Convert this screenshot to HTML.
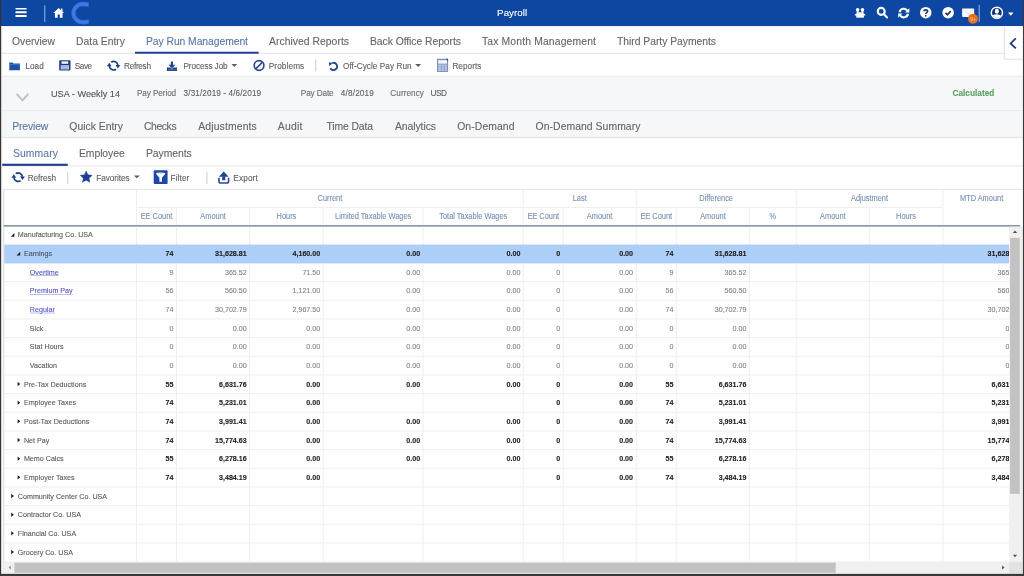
<!DOCTYPE html>
<html><head><meta charset="utf-8"><style>
html,body{margin:0;padding:0;width:1024px;height:576px;overflow:hidden;background:#fff}
#root{position:absolute;left:0;top:0;width:1920px;height:1080px;transform:scale(0.5333333);transform-origin:0 0;filter:blur(0.35px);font-family:"Liberation Sans",sans-serif;color:#555;-webkit-text-stroke:0.2px currentColor;overflow:hidden;background:#fff}
.a{position:absolute;white-space:nowrap}
svg{position:absolute;overflow:visible}
</style></head><body><div id="root">
<div class="a" style="left:0px;top:0px;width:1920px;height:49.5px;background:#0d47a1"></div>
<div class="a" style="left:29.25px;top:14.879999999999999px;width:20.25px;height:3.6px;background:#fff;border-radius:1px"></div>
<div class="a" style="left:29.25px;top:21.44px;width:20.25px;height:3.6px;background:#fff;border-radius:1px"></div>
<div class="a" style="left:29.25px;top:28.19px;width:20.25px;height:3.6px;background:#fff;border-radius:1px"></div>
<div class="a" style="left:82.88px;top:10.12px;width:2px;height:31.13px;background:#8fb0e8"></div>
<svg style="left:99.75px;top:14.62px" width="20.25" height="18.38" viewBox="0 0 20 18"><path d="M10 0 L20 9 L17 9 L17 18 L12 18 L12 12 L8 12 L8 18 L3 18 L3 9 L0 9 Z" fill="#fff"/><rect x="14" y="1" width="3" height="5" fill="#fff"/></svg>
<svg style="left:127.5px;top:0.0px" width="45.0" height="50.62" viewBox="68 0 24 27"><path d="M88.5 2.8 Q86 2.1 82.5 2.1 A11.2 11.05 0 0 0 82.5 24.2 Q86 24.2 88.5 23.5 L88.3 19.6 Q86 20.2 82.5 20.2 A7.4 7.05 0 0 1 82.5 6.1 Q86 6.1 88.3 6.7 Z" fill="#3a79e6" stroke="#2f66d0" stroke-width="0.5"/></svg>
<div class="a" style="left:932.06px;top:12.19px;font-size:18.4px;line-height:24px;color:#fff;font-weight:normal;">Payroll</div>
<svg style="left:1597.5px;top:7.5px" width="30.0" height="30.0" viewBox="852 4 16 16"><circle cx="857.4" cy="9.5" r="1.8" fill="#fff"/><circle cx="862.2" cy="9.5" r="1.8" fill="#fff"/><rect x="856.4" y="10" width="2" height="4" fill="#fff"/><rect x="861.2" y="10" width="2" height="4" fill="#fff"/><path d="M854.2 15.2 Q854.8 13.2 857.2 12.9 L862.4 12.9 Q864.8 13.2 865.4 15.2 Z" fill="#fff"/><rect x="856" y="14.8" width="7.6" height="2.6" fill="#fff"/><rect x="858.5" y="12" width="2.6" height="3" fill="#fff"/></svg>
<svg style="left:1638.75px;top:9.38px" width="30.0" height="30.0" viewBox="874 5 16 16"><circle cx="881.1" cy="11.6" r="3.5" fill="none" stroke="#fff" stroke-width="2.1"/><path d="M883.6 14.2 L886.9 17.6" stroke="#fff" stroke-width="2.1" stroke-linecap="round"/></svg>
<svg style="left:1725.0px;top:13.12px" width="21.56" height="21.56" viewBox="0 0 24 24"><circle cx="12" cy="12" r="12" fill="#fff"/><path d="M8 9 C8 5.5 16 5 16 9 C16 12 12 12 12 14.5" fill="none" stroke="#22306e" stroke-width="3.4"/><circle cx="12" cy="18.5" r="1.8" fill="#22306e"/></svg>
<svg style="left:1767.0px;top:13.12px" width="21.56" height="21.56" viewBox="0 0 24 24"><circle cx="12" cy="12" r="12" fill="#fff"/><path d="M6.5 12.5 L10.5 16.5 L17.5 8.5" fill="none" stroke="#242d6e" stroke-width="3.4"/></svg>
<svg style="left:1803.75px;top:15.94px" width="22.5" height="15.94" viewBox="0 0 24 17"><rect x="0" y="0" width="24" height="17" rx="1.5" fill="#fff"/><path d="M1 1.5 L12 10 L23 1.5" fill="none" stroke="#c9d6ec" stroke-width="1.6"/></svg>
<svg style="left:1815.0px;top:25.88px" width="18.75" height="18.75" viewBox="0 0 20 20"><circle cx="10" cy="10" r="10" fill="#e86f1f"/><text x="10" y="13.5" font-size="10" font-family="Liberation Sans" font-weight="bold" fill="#f6b27a" text-anchor="middle">9+</text></svg>
<div class="a" style="left:1835.44px;top:9.38px;width:2px;height:31.88px;background:#8fb0e8"></div>
<svg style="left:1856.25px;top:11.25px" width="26.25" height="26.25" viewBox="990 6 14 14"><defs><clipPath id="uc"><circle cx="997" cy="12.9" r="4.9"/></clipPath></defs><circle cx="997" cy="12.9" r="5.6" fill="#0b2f78" stroke="#fff" stroke-width="1.5"/><g clip-path="url(#uc)"><ellipse cx="997" cy="11.3" rx="2" ry="2.6" fill="#fff"/><path d="M991 19 Q991.5 14.6 997 14.3 Q1002.5 14.6 1003 19 Z" fill="#fff"/></g></svg>
<svg style="left:1890.0px;top:22.5px" width="10.31" height="6.75" viewBox="0 0 10 6"><path d="M0 0 L10 0 L5 6Z" fill="#fff"/></svg>
<div class="a" style="left:0px;top:49px;width:1920px;height:52px;background:#fff"></div>
<div class="a" style="left:0px;top:99px;width:1920px;height:2px;background:#e2e2e2"></div>
<div class="a" style="left:22.5px;top:65.69px;font-size:19.4px;line-height:25px;color:#656565;font-weight:normal;letter-spacing:-0.032px;">Overview</div>
<div class="a" style="left:142.5px;top:65.69px;font-size:19.4px;line-height:25px;color:#656565;font-weight:normal;letter-spacing:0.026px;">Data Entry</div>
<div class="a" style="left:273.75px;top:65.69px;font-size:19.4px;line-height:25px;color:#5677a8;font-weight:normal;letter-spacing:-0.104px;">Pay Run Management</div>
<div class="a" style="left:504.38px;top:65.69px;font-size:19.4px;line-height:25px;color:#656565;font-weight:normal;letter-spacing:0.081px;">Archived Reports</div>
<div class="a" style="left:693.75px;top:65.69px;font-size:19.4px;line-height:25px;color:#656565;font-weight:normal;letter-spacing:-0.085px;">Back Office Reports</div>
<div class="a" style="left:903.75px;top:65.69px;font-size:19.4px;line-height:25px;color:#656565;font-weight:normal;letter-spacing:0.297px;">Tax Month Management</div>
<div class="a" style="left:1156.88px;top:65.69px;font-size:19.4px;line-height:25px;color:#656565;font-weight:normal;letter-spacing:-0.046px;">Third Party Payments</div>
<div class="a" style="left:253.12px;top:97.31px;width:231.56px;height:4px;background:#23419a"></div>
<div class="a" style="left:0px;top:101px;width:1920px;height:44px;background:#fff"></div>
<div class="a" style="left:0px;top:141.56px;width:1920px;height:2px;background:#e6e6e6"></div>
<svg style="left:15.0px;top:112.5px" width="26.25" height="22.5" viewBox="8 60 14 12"><path d="M9.3 62.6 Q9.3 62.2 9.7 62.2 L12.6 62.2 L13.4 63.2 L19.9 63.2 L19.9 70.1 L9.3 70.1Z" fill="#1f50a8"/><rect x="9.3" y="64.3" width="10.6" height="0.5" fill="#6b93d6"/></svg>
<div class="a" style="left:47.81px;top:114.12px;font-size:15.4px;line-height:20px;color:#606060;font-weight:normal;letter-spacing:-0.012px;transform:scaleY(1.09);">Load</div>
<svg style="left:110.62px;top:113.44px" width="21.19" height="19.31" viewBox="0 0 22 20"><rect x="0" y="0" width="22" height="20" rx="2" fill="#243a80"/><rect x="4.5" y="2" width="13" height="5" fill="#e8eef8"/><rect x="3" y="9.5" width="16" height="8.5" fill="#b9c9e6"/><rect x="5" y="12" width="12" height="1.4" fill="#8ea6d2"/><rect x="5" y="15" width="12" height="1.4" fill="#8ea6d2"/></svg>
<div class="a" style="left:140.06px;top:114.12px;font-size:15.4px;line-height:20px;color:#606060;font-weight:normal;letter-spacing:-0.762px;transform:scaleY(1.09);">Save</div>
<svg style="left:197.81px;top:109.87px" width="30.0" height="26.25" viewBox="105.5 58.599999999999994 16.0 14.0"><path d="M111.03 62.08 A4.3 4.3 0 0 1 117.78 65.23" fill="none" stroke="#1d3a85" stroke-width="1.7"/><path d="M115.97 69.12 A4.3 4.3 0 0 1 109.22 65.97" fill="none" stroke="#1d3a85" stroke-width="1.7"/><path d="M115.39999999999999 65.0 L120.2 65.0 L117.8 68.5Z" fill="#1d3a85"/><path d="M106.8 66.19999999999999 L111.60000000000001 66.19999999999999 L109.2 62.699999999999996Z" fill="#1d3a85"/></svg>
<div class="a" style="left:232.5px;top:114.12px;font-size:15.4px;line-height:20px;color:#606060;font-weight:normal;letter-spacing:-0.549px;transform:scaleY(1.09);">Refresh</div>
<svg style="left:309.38px;top:110.62px" width="26.25" height="26.25" viewBox="165 59 14 14"><rect x="171" y="61.4" width="2.2" height="3.6" fill="#22448f"/><path d="M168.6 64.6 L175.6 64.6 L172.1 68.3Z" fill="#22448f"/><path d="M167.1 67.2 L170.6 67.2 L172.1 68.9 L173.6 67.2 L177.1 67.2 L177.1 70.9 L167.1 70.9Z" fill="#22448f"/><rect x="168.2" y="69.2" width="7.8" height="0.8" fill="#4f77c0"/></svg>
<div class="a" style="left:343.88px;top:114.12px;font-size:15.4px;line-height:20px;color:#606060;font-weight:normal;letter-spacing:-0.167px;transform:scaleY(1.09);">Process Job</div>
<svg style="left:431.25px;top:116.25px" width="18.75" height="11.25" viewBox="230 62 10 6"><path d="M231.6 64.2 L237.3 64.2 L234.45 67.1Z" fill="#5a5a5a"/></svg>
<svg style="left:468.75px;top:108.75px" width="31.88" height="28.12" viewBox="250 58 17 15"><circle cx="258.9" cy="65.4" r="4.85" fill="none" stroke="#2a4796" stroke-width="1.7"/><path d="M255.6 68.7 L262.2 62.1" stroke="#2a4796" stroke-width="1.7"/></svg>
<div class="a" style="left:503.91px;top:114.12px;font-size:15.4px;line-height:20px;color:#606060;font-weight:normal;letter-spacing:0.204px;transform:scaleY(1.09);">Problems</div>
<div class="a" style="left:590.62px;top:111.38px;width:2px;height:23.06px;background:#cfcfcf"></div>
<svg style="left:611.25px;top:110.62px" width="26.25" height="26.25" viewBox="326 59 14 14"><path d="M332.37 62.82 A3.6 3.6 0 1 1 330.48 68.00" fill="none" stroke="#24428f" stroke-width="1.8"/><path d="M329 62.3 L333 62.6 L329.4 66Z" fill="#24428f"/></svg>
<div class="a" style="left:643.12px;top:114.12px;font-size:15.4px;line-height:20px;color:#606060;font-weight:normal;letter-spacing:0.087px;transform:scaleY(1.09);">Off-Cycle Pay Run</div>
<svg style="left:774.38px;top:116.25px" width="18.75" height="11.25" viewBox="413 62 10 6"><path d="M415.4 64.2 L421.3 64.2 L418.35 67.1Z" fill="#5a5a5a"/></svg>
<svg style="left:815.62px;top:106.88px" width="28.12" height="31.88" viewBox="435 57 15 17"><rect x="436.8" y="58.7" width="11.1" height="13.2" fill="#7d8fb9"/><path d="M445.5 58.7 L447.9 58.7 L447.9 61.2Z" fill="#3d4f7e"/><rect x="437.9" y="60.1" width="8.9" height="3.5" fill="#f3f6fc"/><rect x="437.9" y="64.4" width="8.9" height="6.6" fill="#b9c8e8"/><rect x="440.8" y="64.4" width="0.7" height="6.6" fill="#7d8fb9"/><rect x="443.7" y="64.4" width="0.7" height="6.6" fill="#7d8fb9"/><rect x="437.9" y="66.5" width="8.9" height="0.5" fill="#98a9d0"/><rect x="437.9" y="68.6" width="8.9" height="0.5" fill="#98a9d0"/></svg>
<div class="a" style="left:848.25px;top:114.12px;font-size:15.4px;line-height:20px;color:#606060;font-weight:normal;letter-spacing:0.076px;transform:scaleY(1.09);">Reports</div>
<div class="a" style="left:1882.31px;top:49.5px;width:35.809999999999945px;height:62.25px;background:#fff;border-left:2px solid #e2e2e2;border-bottom:2px solid #e2e2e2;box-sizing:border-box"></div>
<svg style="left:1890.0px;top:65.62px" width="18.75" height="30.0" viewBox="1008 35 10 16"><path d="M1015.8 38.2 L1010.6 43.2 L1015.8 48.2" fill="none" stroke="#22397a" stroke-width="1.8"/></svg>
<div class="a" style="left:0px;top:144.38px;width:1920px;height:63.18000000000001px;background:#f6f7f9"></div>
<div class="a" style="left:0px;top:206.62px;width:1920px;height:2px;background:#e3e3e3"></div>
<svg style="left:26.25px;top:168.75px" width="33.75" height="26.25" viewBox="14 90 18 14"><path d="M16.9 93.9 L22.6 100.2 L28.3 93.9" fill="none" stroke="#c2c2c2" stroke-width="2"/></svg>
<div class="a" style="left:95.62px;top:164.50px;font-size:17.16px;line-height:22px;color:#555;font-weight:normal;letter-spacing:0px;">USA - Weekly 14</div>
<div class="a" style="left:256.88px;top:163.62px;font-size:15.4px;line-height:20px;color:#6e6e6e;font-weight:normal;letter-spacing:-0.203px;transform:scaleY(1.09);">Pay Period</div>
<div class="a" style="left:344.25px;top:163.62px;font-size:15.4px;line-height:20px;color:#5e5e5e;font-weight:normal;letter-spacing:0.177px;transform:scaleY(1.09);">3/31/2019 - 4/6/2019</div>
<div class="a" style="left:564.0px;top:163.62px;font-size:15.4px;line-height:20px;color:#6e6e6e;font-weight:normal;letter-spacing:-0.236px;transform:scaleY(1.09);">Pay Date</div>
<div class="a" style="left:639.0px;top:163.62px;font-size:15.4px;line-height:20px;color:#5e5e5e;font-weight:normal;letter-spacing:0.303px;transform:scaleY(1.09);">4/8/2019</div>
<div class="a" style="left:731.81px;top:163.62px;font-size:15.4px;line-height:20px;color:#6e6e6e;font-weight:normal;letter-spacing:0.103px;transform:scaleY(1.09);">Currency</div>
<div class="a" style="left:807.19px;top:163.62px;font-size:15.4px;line-height:20px;color:#5e5e5e;font-weight:normal;letter-spacing:-0.789px;transform:scaleY(1.09);">USD</div>
<div class="a" style="left:1785.94px;top:164.19px;font-size:15.5px;line-height:20px;color:#5a9f5e;font-weight:bold;letter-spacing:0px;transform:scaleY(1.09);">Calculated</div>
<div class="a" style="left:0px;top:208.5px;width:1920px;height:49.120000000000005px;background:#f6f7f9"></div>
<div class="a" style="left:0px;top:257.25px;width:1920px;height:2px;background:#e3e3e3"></div>
<div class="a" style="left:22.88px;top:224.31px;font-size:19.5px;line-height:25px;color:#5d7aa6;font-weight:normal;letter-spacing:-0.278px;">Preview</div>
<div class="a" style="left:129.94px;top:224.31px;font-size:19.5px;line-height:25px;color:#656565;font-weight:normal;letter-spacing:-0.008px;">Quick Entry</div>
<div class="a" style="left:270.0px;top:224.31px;font-size:19.5px;line-height:25px;color:#656565;font-weight:normal;letter-spacing:-0.779px;">Checks</div>
<div class="a" style="left:371.62px;top:224.31px;font-size:19.5px;line-height:25px;color:#656565;font-weight:normal;letter-spacing:0.258px;">Adjustments</div>
<div class="a" style="left:520.88px;top:224.31px;font-size:19.5px;line-height:25px;color:#656565;font-weight:normal;letter-spacing:0.373px;">Audit</div>
<div class="a" style="left:612.0px;top:224.31px;font-size:19.5px;line-height:25px;color:#656565;font-weight:normal;letter-spacing:-0.206px;">Time Data</div>
<div class="a" style="left:740.62px;top:224.31px;font-size:19.5px;line-height:25px;color:#656565;font-weight:normal;letter-spacing:-0.144px;">Analytics</div>
<div class="a" style="left:857.25px;top:224.31px;font-size:19.5px;line-height:25px;color:#656565;font-weight:normal;letter-spacing:0.154px;">On-Demand</div>
<div class="a" style="left:1004.25px;top:224.31px;font-size:19.5px;line-height:25px;color:#656565;font-weight:normal;letter-spacing:0.091px;">On-Demand Summary</div>
<div class="a" style="left:24.19px;top:274.56px;font-size:19.5px;line-height:25px;color:#5d7aa6;font-weight:normal;letter-spacing:0.19px;">Summary</div>
<div class="a" style="left:148.12px;top:274.56px;font-size:19.5px;line-height:25px;color:#656565;font-weight:normal;letter-spacing:-0.146px;">Employee</div>
<div class="a" style="left:273.75px;top:274.56px;font-size:19.5px;line-height:25px;color:#656565;font-weight:normal;letter-spacing:-0.144px;">Payments</div>
<div class="a" style="left:0px;top:309.94px;width:1920px;height:2px;background:#e6e6e6"></div>
<div class="a" style="left:4.31px;top:306.56px;width:122.63px;height:4px;background:#1f3d8e"></div>
<svg style="left:19.12px;top:318.56px" width="30.0" height="26.25" viewBox="10.2 169.9 16.0 14.0"><path d="M15.73 173.38 A4.3 4.3 0 0 1 22.48 176.53" fill="none" stroke="#1d3a85" stroke-width="1.7"/><path d="M20.67 180.42 A4.3 4.3 0 0 1 13.92 177.27" fill="none" stroke="#1d3a85" stroke-width="1.7"/><path d="M20.1 176.3 L24.9 176.3 L22.5 179.8Z" fill="#1d3a85"/><path d="M11.499999999999998 177.5 L16.299999999999997 177.5 L13.899999999999999 174.0Z" fill="#1d3a85"/></svg>
<div class="a" style="left:51.94px;top:323.00px;font-size:15.4px;line-height:20px;color:#606060;font-weight:normal;letter-spacing:-0.08px;transform:scaleY(1.09);">Refresh</div>
<div class="a" style="left:126.0px;top:322.5px;width:2px;height:22.5px;background:#cfcfcf"></div>
<svg style="left:146.25px;top:316.88px" width="30.0" height="30.0" viewBox="78 169 16 16"><path d="M86.30 170.90 L88.09 174.73 L92.29 175.25 L89.20 178.14 L90.00 182.30 L86.30 180.25 L82.60 182.30 L83.40 178.14 L80.31 175.25 L84.51 174.73Z" fill="#1f3f94" stroke="#1f3f94" stroke-width="0.4" stroke-linejoin="round"/></svg>
<div class="a" style="left:180.38px;top:323.00px;font-size:15.4px;line-height:20px;color:#606060;font-weight:normal;letter-spacing:-0.064px;transform:scaleY(1.09);">Favorites</div>
<svg style="left:247.5px;top:326.25px" width="18.75" height="11.25" viewBox="132 174 10 6"><path d="M133.7 175.6 L139.4 175.6 L136.55 178.5Z" fill="#5a5a5a"/></svg>
<svg style="left:285.0px;top:316.88px" width="31.88" height="31.88" viewBox="152 169 17 17"><rect x="153.7" y="170.1" width="13.9" height="13.9" rx="1" fill="#1f47a6"/><path d="M156.2 173.2 Q156.2 172.4 160.65 172.4 Q165.1 172.4 165.1 173.2 L165.1 174 L161.9 177.6 L161.9 181.6 L159.4 181.6 L159.4 177.6 L156.2 174Z" fill="#fff"/><ellipse cx="160.65" cy="173.5" rx="3.2" ry="0.5" fill="#c9d6f0"/></svg>
<div class="a" style="left:319.88px;top:323.00px;font-size:15.4px;line-height:20px;color:#606060;font-weight:normal;letter-spacing:0.169px;transform:scaleY(1.09);">Filter</div>
<div class="a" style="left:387.0px;top:322.5px;width:2px;height:22.5px;background:#cfcfcf"></div>
<svg style="left:405.0px;top:316.88px" width="28.12" height="31.88" viewBox="216 169 15 17"><path d="M218.9 176.8 L223.75 171.4 L228.6 176.8Z" fill="#21449a"/><rect x="222.2" y="176.3" width="3.1" height="3.9" fill="#21449a"/><path d="M219 177.6 L219 181.2 Q219 183 220.8 183 L226.8 183 Q228.6 183 228.6 181.2 L228.6 177.6" fill="none" stroke="#2b4a94" stroke-width="1.6"/></svg>
<div class="a" style="left:437.44px;top:323.00px;font-size:15.4px;line-height:20px;color:#606060;font-weight:normal;letter-spacing:0.286px;transform:scaleY(1.09);">Export</div>
<svg style="left:1680.0px;top:7.5px" width="30.0" height="33.75" viewBox="896 4 16 18"><path d="M899.57 12.00 A4.3 4.3 0 0 1 907.52 10.60" fill="none" stroke="#fff" stroke-width="2.1"/><path d="M908.03 13.50 A4.3 4.3 0 0 1 900.08 14.90" fill="none" stroke="#fff" stroke-width="2.1"/><path d="M909.4 7.9 L909.4 12.2 L905.1 12.2Z" fill="#fff"/><path d="M898.2 17.6 L898.2 13.3 L902.5 13.3Z" fill="#fff"/></svg>
<div class="a" style="left:0;top:354.38px;width:1920px;height:725.62px;background:#fff"></div>
<div class="a" style="left:5.56px;top:354.38px;width:2px;height:725.62px;background:#dcdcdc"></div>
<div class="a" style="left:6.56px;top:354.38px;width:1911.0px;height:2px;background:#e6e6e6"></div>
<div class="a" style="left:255.94px;top:388.12px;width:1511.62px;height:2px;background:#efefef"></div>
<div class="a" style="left:254.94px;top:354.38px;width:2px;height:68.62px;background:#efefef"></div>
<div class="a" style="left:329.94px;top:388.12px;width:2px;height:34.879999999999995px;background:#efefef"></div>
<div class="a" style="left:467.19px;top:388.12px;width:2px;height:34.879999999999995px;background:#efefef"></div>
<div class="a" style="left:605.0px;top:388.12px;width:2px;height:34.879999999999995px;background:#efefef"></div>
<div class="a" style="left:792.31px;top:388.12px;width:2px;height:34.879999999999995px;background:#efefef"></div>
<div class="a" style="left:980.38px;top:354.38px;width:2px;height:68.62px;background:#efefef"></div>
<div class="a" style="left:1055.0px;top:388.12px;width:2px;height:34.879999999999995px;background:#efefef"></div>
<div class="a" style="left:1191.5px;top:354.38px;width:2px;height:68.62px;background:#efefef"></div>
<div class="a" style="left:1267.44px;top:388.12px;width:2px;height:34.879999999999995px;background:#efefef"></div>
<div class="a" style="left:1404.12px;top:388.12px;width:2px;height:34.879999999999995px;background:#efefef"></div>
<div class="a" style="left:1492.06px;top:354.38px;width:2px;height:68.62px;background:#efefef"></div>
<div class="a" style="left:1628.94px;top:388.12px;width:2px;height:34.879999999999995px;background:#efefef"></div>
<div class="a" style="left:1766.56px;top:354.38px;width:2px;height:68.62px;background:#efefef"></div>
<div class="a" style="left:255.94px;top:361.25px;width:725.44px;text-align:center;font-size:13.9px;line-height:20px;color:#7891b6;font-weight:normal;transform:scaleY(1.1)">Current</div>
<div class="a" style="left:981.38px;top:361.25px;width:211.12px;text-align:center;font-size:13.9px;line-height:20px;color:#7891b6;font-weight:normal;transform:scaleY(1.1)">Last</div>
<div class="a" style="left:1192.5px;top:361.25px;width:300.55999999999995px;text-align:center;font-size:13.9px;line-height:20px;color:#7891b6;font-weight:normal;transform:scaleY(1.1)">Difference</div>
<div class="a" style="left:1493.06px;top:361.25px;width:274.5px;text-align:center;font-size:13.9px;line-height:20px;color:#7891b6;font-weight:normal;transform:scaleY(1.1)">Adjustment</div>
<div class="a" style="left:1767.56px;top:361.25px;width:145.8800000000001px;text-align:center;font-size:13.9px;line-height:20px;color:#7891b6;font-weight:normal;transform:scaleY(1.1)">MTD Amount</div>
<div class="a" style="left:255.94px;top:395.94px;width:75.0px;text-align:center;font-size:13.9px;line-height:20px;color:#7891b6;font-weight:normal;transform:scaleY(1.1)">EE Count</div>
<div class="a" style="left:330.94px;top:395.94px;width:137.25px;text-align:center;font-size:13.9px;line-height:20px;color:#7891b6;font-weight:normal;transform:scaleY(1.1)">Amount</div>
<div class="a" style="left:468.19px;top:395.94px;width:137.81px;text-align:center;font-size:13.9px;line-height:20px;color:#7891b6;font-weight:normal;transform:scaleY(1.1)">Hours</div>
<div class="a" style="left:606.0px;top:395.94px;width:187.30999999999995px;text-align:center;font-size:13.9px;line-height:20px;color:#7891b6;font-weight:normal;transform:scaleY(1.1)">Limited Taxable Wages</div>
<div class="a" style="left:793.31px;top:395.94px;width:188.07000000000005px;text-align:center;font-size:13.9px;line-height:20px;color:#7891b6;font-weight:normal;transform:scaleY(1.1)">Total Taxable Wages</div>
<div class="a" style="left:981.38px;top:395.94px;width:74.62px;text-align:center;font-size:13.9px;line-height:20px;color:#7891b6;font-weight:normal;transform:scaleY(1.1)">EE Count</div>
<div class="a" style="left:1056.0px;top:395.94px;width:136.5px;text-align:center;font-size:13.9px;line-height:20px;color:#7891b6;font-weight:normal;transform:scaleY(1.1)">Amount</div>
<div class="a" style="left:1192.5px;top:395.94px;width:75.94000000000005px;text-align:center;font-size:13.9px;line-height:20px;color:#7891b6;font-weight:normal;transform:scaleY(1.1)">EE Count</div>
<div class="a" style="left:1268.44px;top:395.94px;width:136.67999999999984px;text-align:center;font-size:13.9px;line-height:20px;color:#7891b6;font-weight:normal;transform:scaleY(1.1)">Amount</div>
<div class="a" style="left:1405.12px;top:395.94px;width:87.94000000000005px;text-align:center;font-size:13.9px;line-height:20px;color:#7891b6;font-weight:normal;transform:scaleY(1.1)">%</div>
<div class="a" style="left:1493.06px;top:395.94px;width:136.8800000000001px;text-align:center;font-size:13.9px;line-height:20px;color:#7891b6;font-weight:normal;transform:scaleY(1.1)">Amount</div>
<div class="a" style="left:1629.94px;top:395.94px;width:137.6199999999999px;text-align:center;font-size:13.9px;line-height:20px;color:#7891b6;font-weight:normal;transform:scaleY(1.1)">Hours</div>
<div class="a" style="left:6.56px;top:421.5px;width:1906.88px;height:3px;background:#8393a6"></div>
<div class="a" style="left:0;top:424.5px;width:1892.25px;height:628.69px;overflow:hidden"><div class="a" style="left:0;top:-424.5px;width:1920px;height:1080px"><div class="a" style="left:7.56px;top:457px;width:1906.88px;height:2px;background:#efefef"></div>
<div class="a" style="left:254.94px;top:423px;width:2px;height:35px;background:#efefef"></div>
<div class="a" style="left:329.94px;top:423px;width:2px;height:35px;background:#efefef"></div>
<div class="a" style="left:467.19px;top:423px;width:2px;height:35px;background:#efefef"></div>
<div class="a" style="left:605.0px;top:423px;width:2px;height:35px;background:#efefef"></div>
<div class="a" style="left:792.31px;top:423px;width:2px;height:35px;background:#efefef"></div>
<div class="a" style="left:980.38px;top:423px;width:2px;height:35px;background:#efefef"></div>
<div class="a" style="left:1055.0px;top:423px;width:2px;height:35px;background:#efefef"></div>
<div class="a" style="left:1191.5px;top:423px;width:2px;height:35px;background:#efefef"></div>
<div class="a" style="left:1267.44px;top:423px;width:2px;height:35px;background:#efefef"></div>
<div class="a" style="left:1404.12px;top:423px;width:2px;height:35px;background:#efefef"></div>
<div class="a" style="left:1492.06px;top:423px;width:2px;height:35px;background:#efefef"></div>
<div class="a" style="left:1628.94px;top:423px;width:2px;height:35px;background:#efefef"></div>
<div class="a" style="left:1766.56px;top:423px;width:2px;height:35px;background:#efefef"></div>
<svg style="left:19.690000000000005px;top:436.5px" width="7" height="7" viewBox="0 0 7 7"><path d="M7 0 L7 7 L0 7Z" fill="#222"/></svg>
<div class="a" style="left:33.38px;top:430.5px;font-size:13.4px;line-height:20px;transform:scaleY(1.07);color:#5a5a5a">Manufacturing Co. USA</div>
<div class="a" style="left:7.56px;top:459px;width:1906.88px;height:34.5px;background:#adcef7"></div>
<div class="a" style="left:254.94px;top:458px;width:2px;height:35px;background:#adcef7"></div>
<div class="a" style="left:329.94px;top:458px;width:2px;height:35px;background:#adcef7"></div>
<div class="a" style="left:467.19px;top:458px;width:2px;height:35px;background:#adcef7"></div>
<div class="a" style="left:605.0px;top:458px;width:2px;height:35px;background:#adcef7"></div>
<div class="a" style="left:792.31px;top:458px;width:2px;height:35px;background:#adcef7"></div>
<div class="a" style="left:980.38px;top:458px;width:2px;height:35px;background:#adcef7"></div>
<div class="a" style="left:1055.0px;top:458px;width:2px;height:35px;background:#adcef7"></div>
<div class="a" style="left:1191.5px;top:458px;width:2px;height:35px;background:#adcef7"></div>
<div class="a" style="left:1267.44px;top:458px;width:2px;height:35px;background:#adcef7"></div>
<div class="a" style="left:1404.12px;top:458px;width:2px;height:35px;background:#adcef7"></div>
<div class="a" style="left:1492.06px;top:458px;width:2px;height:35px;background:#adcef7"></div>
<div class="a" style="left:1628.94px;top:458px;width:2px;height:35px;background:#adcef7"></div>
<div class="a" style="left:1766.56px;top:458px;width:2px;height:35px;background:#adcef7"></div>
<svg style="left:31.120000000000005px;top:471.5px" width="7" height="7" viewBox="0 0 7 7"><path d="M7 0 L7 7 L0 7Z" fill="#222"/></svg>
<div class="a" style="left:44.81px;top:465.5px;font-size:13.4px;line-height:20px;transform:scaleY(1.07);color:#4a5566">Earnings</div>
<div class="a" style="left:125.44px;top:465.5px;width:200px;text-align:right;font-size:13.4px;line-height:20px;transform:scaleY(1.07);color:#1e1e1e;font-weight:bold">74</div>
<div class="a" style="left:262.69px;top:465.5px;width:200px;text-align:right;font-size:13.4px;line-height:20px;transform:scaleY(1.07);color:#1e1e1e;font-weight:bold">31,628.81</div>
<div class="a" style="left:400.5px;top:465.5px;width:200px;text-align:right;font-size:13.4px;line-height:20px;transform:scaleY(1.07);color:#1e1e1e;font-weight:bold">4,160.00</div>
<div class="a" style="left:587.81px;top:465.5px;width:200px;text-align:right;font-size:13.4px;line-height:20px;transform:scaleY(1.07);color:#1e1e1e;font-weight:bold">0.00</div>
<div class="a" style="left:775.88px;top:465.5px;width:200px;text-align:right;font-size:13.4px;line-height:20px;transform:scaleY(1.07);color:#1e1e1e;font-weight:bold">0.00</div>
<div class="a" style="left:850.5px;top:465.5px;width:200px;text-align:right;font-size:13.4px;line-height:20px;transform:scaleY(1.07);color:#1e1e1e;font-weight:bold">0</div>
<div class="a" style="left:987.0px;top:465.5px;width:200px;text-align:right;font-size:13.4px;line-height:20px;transform:scaleY(1.07);color:#1e1e1e;font-weight:bold">0.00</div>
<div class="a" style="left:1062.94px;top:465.5px;width:200px;text-align:right;font-size:13.4px;line-height:20px;transform:scaleY(1.07);color:#1e1e1e;font-weight:bold">74</div>
<div class="a" style="left:1199.62px;top:465.5px;width:200px;text-align:right;font-size:13.4px;line-height:20px;transform:scaleY(1.07);color:#1e1e1e;font-weight:bold">31,628.81</div>
<div class="a" style="left:1711.19px;top:465.5px;width:200px;text-align:right;font-size:13.4px;line-height:20px;transform:scaleY(1.07);color:#1e1e1e;font-weight:bold">31,628.81</div>
<div class="a" style="left:7.56px;top:527px;width:1906.88px;height:2px;background:#efefef"></div>
<div class="a" style="left:254.94px;top:493px;width:2px;height:35px;background:#efefef"></div>
<div class="a" style="left:329.94px;top:493px;width:2px;height:35px;background:#efefef"></div>
<div class="a" style="left:467.19px;top:493px;width:2px;height:35px;background:#efefef"></div>
<div class="a" style="left:605.0px;top:493px;width:2px;height:35px;background:#efefef"></div>
<div class="a" style="left:792.31px;top:493px;width:2px;height:35px;background:#efefef"></div>
<div class="a" style="left:980.38px;top:493px;width:2px;height:35px;background:#efefef"></div>
<div class="a" style="left:1055.0px;top:493px;width:2px;height:35px;background:#efefef"></div>
<div class="a" style="left:1191.5px;top:493px;width:2px;height:35px;background:#efefef"></div>
<div class="a" style="left:1267.44px;top:493px;width:2px;height:35px;background:#efefef"></div>
<div class="a" style="left:1404.12px;top:493px;width:2px;height:35px;background:#efefef"></div>
<div class="a" style="left:1492.06px;top:493px;width:2px;height:35px;background:#efefef"></div>
<div class="a" style="left:1628.94px;top:493px;width:2px;height:35px;background:#efefef"></div>
<div class="a" style="left:1766.56px;top:493px;width:2px;height:35px;background:#efefef"></div>
<div class="a" style="left:55.88px;top:500.5px;font-size:13.4px;line-height:20px;transform:scaleY(1.07);color:#5656c4;text-decoration:underline;text-decoration-color:#8c8cd8">Overtime</div>
<div class="a" style="left:125.44px;top:500.5px;width:200px;text-align:right;font-size:13.4px;line-height:20px;transform:scaleY(1.07);color:#838383;font-weight:normal">9</div>
<div class="a" style="left:262.69px;top:500.5px;width:200px;text-align:right;font-size:13.4px;line-height:20px;transform:scaleY(1.07);color:#838383;font-weight:normal">365.52</div>
<div class="a" style="left:400.5px;top:500.5px;width:200px;text-align:right;font-size:13.4px;line-height:20px;transform:scaleY(1.07);color:#838383;font-weight:normal">71.50</div>
<div class="a" style="left:587.81px;top:500.5px;width:200px;text-align:right;font-size:13.4px;line-height:20px;transform:scaleY(1.07);color:#838383;font-weight:normal">0.00</div>
<div class="a" style="left:775.88px;top:500.5px;width:200px;text-align:right;font-size:13.4px;line-height:20px;transform:scaleY(1.07);color:#838383;font-weight:normal">0.00</div>
<div class="a" style="left:850.5px;top:500.5px;width:200px;text-align:right;font-size:13.4px;line-height:20px;transform:scaleY(1.07);color:#838383;font-weight:normal">0</div>
<div class="a" style="left:987.0px;top:500.5px;width:200px;text-align:right;font-size:13.4px;line-height:20px;transform:scaleY(1.07);color:#838383;font-weight:normal">0.00</div>
<div class="a" style="left:1062.94px;top:500.5px;width:200px;text-align:right;font-size:13.4px;line-height:20px;transform:scaleY(1.07);color:#838383;font-weight:normal">9</div>
<div class="a" style="left:1199.62px;top:500.5px;width:200px;text-align:right;font-size:13.4px;line-height:20px;transform:scaleY(1.07);color:#838383;font-weight:normal">365.52</div>
<div class="a" style="left:1711.19px;top:500.5px;width:200px;text-align:right;font-size:13.4px;line-height:20px;transform:scaleY(1.07);color:#838383;font-weight:normal">365.52</div>
<div class="a" style="left:7.56px;top:562px;width:1906.88px;height:2px;background:#efefef"></div>
<div class="a" style="left:254.94px;top:528px;width:2px;height:35px;background:#efefef"></div>
<div class="a" style="left:329.94px;top:528px;width:2px;height:35px;background:#efefef"></div>
<div class="a" style="left:467.19px;top:528px;width:2px;height:35px;background:#efefef"></div>
<div class="a" style="left:605.0px;top:528px;width:2px;height:35px;background:#efefef"></div>
<div class="a" style="left:792.31px;top:528px;width:2px;height:35px;background:#efefef"></div>
<div class="a" style="left:980.38px;top:528px;width:2px;height:35px;background:#efefef"></div>
<div class="a" style="left:1055.0px;top:528px;width:2px;height:35px;background:#efefef"></div>
<div class="a" style="left:1191.5px;top:528px;width:2px;height:35px;background:#efefef"></div>
<div class="a" style="left:1267.44px;top:528px;width:2px;height:35px;background:#efefef"></div>
<div class="a" style="left:1404.12px;top:528px;width:2px;height:35px;background:#efefef"></div>
<div class="a" style="left:1492.06px;top:528px;width:2px;height:35px;background:#efefef"></div>
<div class="a" style="left:1628.94px;top:528px;width:2px;height:35px;background:#efefef"></div>
<div class="a" style="left:1766.56px;top:528px;width:2px;height:35px;background:#efefef"></div>
<div class="a" style="left:55.88px;top:535.5px;font-size:13.4px;line-height:20px;transform:scaleY(1.07);color:#5656c4;text-decoration:underline;text-decoration-color:#8c8cd8">Premium Pay</div>
<div class="a" style="left:125.44px;top:535.5px;width:200px;text-align:right;font-size:13.4px;line-height:20px;transform:scaleY(1.07);color:#838383;font-weight:normal">56</div>
<div class="a" style="left:262.69px;top:535.5px;width:200px;text-align:right;font-size:13.4px;line-height:20px;transform:scaleY(1.07);color:#838383;font-weight:normal">560.50</div>
<div class="a" style="left:400.5px;top:535.5px;width:200px;text-align:right;font-size:13.4px;line-height:20px;transform:scaleY(1.07);color:#838383;font-weight:normal">1,121.00</div>
<div class="a" style="left:587.81px;top:535.5px;width:200px;text-align:right;font-size:13.4px;line-height:20px;transform:scaleY(1.07);color:#838383;font-weight:normal">0.00</div>
<div class="a" style="left:775.88px;top:535.5px;width:200px;text-align:right;font-size:13.4px;line-height:20px;transform:scaleY(1.07);color:#838383;font-weight:normal">0.00</div>
<div class="a" style="left:850.5px;top:535.5px;width:200px;text-align:right;font-size:13.4px;line-height:20px;transform:scaleY(1.07);color:#838383;font-weight:normal">0</div>
<div class="a" style="left:987.0px;top:535.5px;width:200px;text-align:right;font-size:13.4px;line-height:20px;transform:scaleY(1.07);color:#838383;font-weight:normal">0.00</div>
<div class="a" style="left:1062.94px;top:535.5px;width:200px;text-align:right;font-size:13.4px;line-height:20px;transform:scaleY(1.07);color:#838383;font-weight:normal">56</div>
<div class="a" style="left:1199.62px;top:535.5px;width:200px;text-align:right;font-size:13.4px;line-height:20px;transform:scaleY(1.07);color:#838383;font-weight:normal">560.50</div>
<div class="a" style="left:1711.19px;top:535.5px;width:200px;text-align:right;font-size:13.4px;line-height:20px;transform:scaleY(1.07);color:#838383;font-weight:normal">560.50</div>
<div class="a" style="left:7.56px;top:597px;width:1906.88px;height:2px;background:#efefef"></div>
<div class="a" style="left:254.94px;top:563px;width:2px;height:35px;background:#efefef"></div>
<div class="a" style="left:329.94px;top:563px;width:2px;height:35px;background:#efefef"></div>
<div class="a" style="left:467.19px;top:563px;width:2px;height:35px;background:#efefef"></div>
<div class="a" style="left:605.0px;top:563px;width:2px;height:35px;background:#efefef"></div>
<div class="a" style="left:792.31px;top:563px;width:2px;height:35px;background:#efefef"></div>
<div class="a" style="left:980.38px;top:563px;width:2px;height:35px;background:#efefef"></div>
<div class="a" style="left:1055.0px;top:563px;width:2px;height:35px;background:#efefef"></div>
<div class="a" style="left:1191.5px;top:563px;width:2px;height:35px;background:#efefef"></div>
<div class="a" style="left:1267.44px;top:563px;width:2px;height:35px;background:#efefef"></div>
<div class="a" style="left:1404.12px;top:563px;width:2px;height:35px;background:#efefef"></div>
<div class="a" style="left:1492.06px;top:563px;width:2px;height:35px;background:#efefef"></div>
<div class="a" style="left:1628.94px;top:563px;width:2px;height:35px;background:#efefef"></div>
<div class="a" style="left:1766.56px;top:563px;width:2px;height:35px;background:#efefef"></div>
<div class="a" style="left:55.88px;top:570.5px;font-size:13.4px;line-height:20px;transform:scaleY(1.07);color:#5656c4;text-decoration:underline;text-decoration-color:#8c8cd8">Regular</div>
<div class="a" style="left:125.44px;top:570.5px;width:200px;text-align:right;font-size:13.4px;line-height:20px;transform:scaleY(1.07);color:#838383;font-weight:normal">74</div>
<div class="a" style="left:262.69px;top:570.5px;width:200px;text-align:right;font-size:13.4px;line-height:20px;transform:scaleY(1.07);color:#838383;font-weight:normal">30,702.79</div>
<div class="a" style="left:400.5px;top:570.5px;width:200px;text-align:right;font-size:13.4px;line-height:20px;transform:scaleY(1.07);color:#838383;font-weight:normal">2,967.50</div>
<div class="a" style="left:587.81px;top:570.5px;width:200px;text-align:right;font-size:13.4px;line-height:20px;transform:scaleY(1.07);color:#838383;font-weight:normal">0.00</div>
<div class="a" style="left:775.88px;top:570.5px;width:200px;text-align:right;font-size:13.4px;line-height:20px;transform:scaleY(1.07);color:#838383;font-weight:normal">0.00</div>
<div class="a" style="left:850.5px;top:570.5px;width:200px;text-align:right;font-size:13.4px;line-height:20px;transform:scaleY(1.07);color:#838383;font-weight:normal">0</div>
<div class="a" style="left:987.0px;top:570.5px;width:200px;text-align:right;font-size:13.4px;line-height:20px;transform:scaleY(1.07);color:#838383;font-weight:normal">0.00</div>
<div class="a" style="left:1062.94px;top:570.5px;width:200px;text-align:right;font-size:13.4px;line-height:20px;transform:scaleY(1.07);color:#838383;font-weight:normal">74</div>
<div class="a" style="left:1199.62px;top:570.5px;width:200px;text-align:right;font-size:13.4px;line-height:20px;transform:scaleY(1.07);color:#838383;font-weight:normal">30,702.79</div>
<div class="a" style="left:1711.19px;top:570.5px;width:200px;text-align:right;font-size:13.4px;line-height:20px;transform:scaleY(1.07);color:#838383;font-weight:normal">30,702.79</div>
<div class="a" style="left:7.56px;top:632px;width:1906.88px;height:2px;background:#efefef"></div>
<div class="a" style="left:254.94px;top:598px;width:2px;height:35px;background:#efefef"></div>
<div class="a" style="left:329.94px;top:598px;width:2px;height:35px;background:#efefef"></div>
<div class="a" style="left:467.19px;top:598px;width:2px;height:35px;background:#efefef"></div>
<div class="a" style="left:605.0px;top:598px;width:2px;height:35px;background:#efefef"></div>
<div class="a" style="left:792.31px;top:598px;width:2px;height:35px;background:#efefef"></div>
<div class="a" style="left:980.38px;top:598px;width:2px;height:35px;background:#efefef"></div>
<div class="a" style="left:1055.0px;top:598px;width:2px;height:35px;background:#efefef"></div>
<div class="a" style="left:1191.5px;top:598px;width:2px;height:35px;background:#efefef"></div>
<div class="a" style="left:1267.44px;top:598px;width:2px;height:35px;background:#efefef"></div>
<div class="a" style="left:1404.12px;top:598px;width:2px;height:35px;background:#efefef"></div>
<div class="a" style="left:1492.06px;top:598px;width:2px;height:35px;background:#efefef"></div>
<div class="a" style="left:1628.94px;top:598px;width:2px;height:35px;background:#efefef"></div>
<div class="a" style="left:1766.56px;top:598px;width:2px;height:35px;background:#efefef"></div>
<div class="a" style="left:55.88px;top:605.5px;font-size:13.4px;line-height:20px;transform:scaleY(1.07);color:#5a5a5a">Sick</div>
<div class="a" style="left:125.44px;top:605.5px;width:200px;text-align:right;font-size:13.4px;line-height:20px;transform:scaleY(1.07);color:#838383;font-weight:normal">0</div>
<div class="a" style="left:262.69px;top:605.5px;width:200px;text-align:right;font-size:13.4px;line-height:20px;transform:scaleY(1.07);color:#838383;font-weight:normal">0.00</div>
<div class="a" style="left:400.5px;top:605.5px;width:200px;text-align:right;font-size:13.4px;line-height:20px;transform:scaleY(1.07);color:#838383;font-weight:normal">0.00</div>
<div class="a" style="left:587.81px;top:605.5px;width:200px;text-align:right;font-size:13.4px;line-height:20px;transform:scaleY(1.07);color:#838383;font-weight:normal">0.00</div>
<div class="a" style="left:775.88px;top:605.5px;width:200px;text-align:right;font-size:13.4px;line-height:20px;transform:scaleY(1.07);color:#838383;font-weight:normal">0.00</div>
<div class="a" style="left:850.5px;top:605.5px;width:200px;text-align:right;font-size:13.4px;line-height:20px;transform:scaleY(1.07);color:#838383;font-weight:normal">0</div>
<div class="a" style="left:987.0px;top:605.5px;width:200px;text-align:right;font-size:13.4px;line-height:20px;transform:scaleY(1.07);color:#838383;font-weight:normal">0.00</div>
<div class="a" style="left:1062.94px;top:605.5px;width:200px;text-align:right;font-size:13.4px;line-height:20px;transform:scaleY(1.07);color:#838383;font-weight:normal">0</div>
<div class="a" style="left:1199.62px;top:605.5px;width:200px;text-align:right;font-size:13.4px;line-height:20px;transform:scaleY(1.07);color:#838383;font-weight:normal">0.00</div>
<div class="a" style="left:1711.19px;top:605.5px;width:200px;text-align:right;font-size:13.4px;line-height:20px;transform:scaleY(1.07);color:#838383;font-weight:normal">0.00</div>
<div class="a" style="left:7.56px;top:667px;width:1906.88px;height:2px;background:#efefef"></div>
<div class="a" style="left:254.94px;top:633px;width:2px;height:35px;background:#efefef"></div>
<div class="a" style="left:329.94px;top:633px;width:2px;height:35px;background:#efefef"></div>
<div class="a" style="left:467.19px;top:633px;width:2px;height:35px;background:#efefef"></div>
<div class="a" style="left:605.0px;top:633px;width:2px;height:35px;background:#efefef"></div>
<div class="a" style="left:792.31px;top:633px;width:2px;height:35px;background:#efefef"></div>
<div class="a" style="left:980.38px;top:633px;width:2px;height:35px;background:#efefef"></div>
<div class="a" style="left:1055.0px;top:633px;width:2px;height:35px;background:#efefef"></div>
<div class="a" style="left:1191.5px;top:633px;width:2px;height:35px;background:#efefef"></div>
<div class="a" style="left:1267.44px;top:633px;width:2px;height:35px;background:#efefef"></div>
<div class="a" style="left:1404.12px;top:633px;width:2px;height:35px;background:#efefef"></div>
<div class="a" style="left:1492.06px;top:633px;width:2px;height:35px;background:#efefef"></div>
<div class="a" style="left:1628.94px;top:633px;width:2px;height:35px;background:#efefef"></div>
<div class="a" style="left:1766.56px;top:633px;width:2px;height:35px;background:#efefef"></div>
<div class="a" style="left:55.88px;top:640.5px;font-size:13.4px;line-height:20px;transform:scaleY(1.07);color:#5a5a5a">Stat Hours</div>
<div class="a" style="left:125.44px;top:640.5px;width:200px;text-align:right;font-size:13.4px;line-height:20px;transform:scaleY(1.07);color:#838383;font-weight:normal">0</div>
<div class="a" style="left:262.69px;top:640.5px;width:200px;text-align:right;font-size:13.4px;line-height:20px;transform:scaleY(1.07);color:#838383;font-weight:normal">0.00</div>
<div class="a" style="left:400.5px;top:640.5px;width:200px;text-align:right;font-size:13.4px;line-height:20px;transform:scaleY(1.07);color:#838383;font-weight:normal">0.00</div>
<div class="a" style="left:587.81px;top:640.5px;width:200px;text-align:right;font-size:13.4px;line-height:20px;transform:scaleY(1.07);color:#838383;font-weight:normal">0.00</div>
<div class="a" style="left:775.88px;top:640.5px;width:200px;text-align:right;font-size:13.4px;line-height:20px;transform:scaleY(1.07);color:#838383;font-weight:normal">0.00</div>
<div class="a" style="left:850.5px;top:640.5px;width:200px;text-align:right;font-size:13.4px;line-height:20px;transform:scaleY(1.07);color:#838383;font-weight:normal">0</div>
<div class="a" style="left:987.0px;top:640.5px;width:200px;text-align:right;font-size:13.4px;line-height:20px;transform:scaleY(1.07);color:#838383;font-weight:normal">0.00</div>
<div class="a" style="left:1062.94px;top:640.5px;width:200px;text-align:right;font-size:13.4px;line-height:20px;transform:scaleY(1.07);color:#838383;font-weight:normal">0</div>
<div class="a" style="left:1199.62px;top:640.5px;width:200px;text-align:right;font-size:13.4px;line-height:20px;transform:scaleY(1.07);color:#838383;font-weight:normal">0.00</div>
<div class="a" style="left:1711.19px;top:640.5px;width:200px;text-align:right;font-size:13.4px;line-height:20px;transform:scaleY(1.07);color:#838383;font-weight:normal">0.00</div>
<div class="a" style="left:7.56px;top:702px;width:1906.88px;height:2px;background:#efefef"></div>
<div class="a" style="left:254.94px;top:668px;width:2px;height:35px;background:#efefef"></div>
<div class="a" style="left:329.94px;top:668px;width:2px;height:35px;background:#efefef"></div>
<div class="a" style="left:467.19px;top:668px;width:2px;height:35px;background:#efefef"></div>
<div class="a" style="left:605.0px;top:668px;width:2px;height:35px;background:#efefef"></div>
<div class="a" style="left:792.31px;top:668px;width:2px;height:35px;background:#efefef"></div>
<div class="a" style="left:980.38px;top:668px;width:2px;height:35px;background:#efefef"></div>
<div class="a" style="left:1055.0px;top:668px;width:2px;height:35px;background:#efefef"></div>
<div class="a" style="left:1191.5px;top:668px;width:2px;height:35px;background:#efefef"></div>
<div class="a" style="left:1267.44px;top:668px;width:2px;height:35px;background:#efefef"></div>
<div class="a" style="left:1404.12px;top:668px;width:2px;height:35px;background:#efefef"></div>
<div class="a" style="left:1492.06px;top:668px;width:2px;height:35px;background:#efefef"></div>
<div class="a" style="left:1628.94px;top:668px;width:2px;height:35px;background:#efefef"></div>
<div class="a" style="left:1766.56px;top:668px;width:2px;height:35px;background:#efefef"></div>
<div class="a" style="left:55.88px;top:675.5px;font-size:13.4px;line-height:20px;transform:scaleY(1.07);color:#5a5a5a">Vacation</div>
<div class="a" style="left:125.44px;top:675.5px;width:200px;text-align:right;font-size:13.4px;line-height:20px;transform:scaleY(1.07);color:#838383;font-weight:normal">0</div>
<div class="a" style="left:262.69px;top:675.5px;width:200px;text-align:right;font-size:13.4px;line-height:20px;transform:scaleY(1.07);color:#838383;font-weight:normal">0.00</div>
<div class="a" style="left:400.5px;top:675.5px;width:200px;text-align:right;font-size:13.4px;line-height:20px;transform:scaleY(1.07);color:#838383;font-weight:normal">0.00</div>
<div class="a" style="left:587.81px;top:675.5px;width:200px;text-align:right;font-size:13.4px;line-height:20px;transform:scaleY(1.07);color:#838383;font-weight:normal">0.00</div>
<div class="a" style="left:775.88px;top:675.5px;width:200px;text-align:right;font-size:13.4px;line-height:20px;transform:scaleY(1.07);color:#838383;font-weight:normal">0.00</div>
<div class="a" style="left:850.5px;top:675.5px;width:200px;text-align:right;font-size:13.4px;line-height:20px;transform:scaleY(1.07);color:#838383;font-weight:normal">0</div>
<div class="a" style="left:987.0px;top:675.5px;width:200px;text-align:right;font-size:13.4px;line-height:20px;transform:scaleY(1.07);color:#838383;font-weight:normal">0.00</div>
<div class="a" style="left:1062.94px;top:675.5px;width:200px;text-align:right;font-size:13.4px;line-height:20px;transform:scaleY(1.07);color:#838383;font-weight:normal">0</div>
<div class="a" style="left:1199.62px;top:675.5px;width:200px;text-align:right;font-size:13.4px;line-height:20px;transform:scaleY(1.07);color:#838383;font-weight:normal">0.00</div>
<div class="a" style="left:1711.19px;top:675.5px;width:200px;text-align:right;font-size:13.4px;line-height:20px;transform:scaleY(1.07);color:#838383;font-weight:normal">0.00</div>
<div class="a" style="left:7.56px;top:737px;width:1906.88px;height:2px;background:#efefef"></div>
<div class="a" style="left:254.94px;top:703px;width:2px;height:35px;background:#efefef"></div>
<div class="a" style="left:329.94px;top:703px;width:2px;height:35px;background:#efefef"></div>
<div class="a" style="left:467.19px;top:703px;width:2px;height:35px;background:#efefef"></div>
<div class="a" style="left:605.0px;top:703px;width:2px;height:35px;background:#efefef"></div>
<div class="a" style="left:792.31px;top:703px;width:2px;height:35px;background:#efefef"></div>
<div class="a" style="left:980.38px;top:703px;width:2px;height:35px;background:#efefef"></div>
<div class="a" style="left:1055.0px;top:703px;width:2px;height:35px;background:#efefef"></div>
<div class="a" style="left:1191.5px;top:703px;width:2px;height:35px;background:#efefef"></div>
<div class="a" style="left:1267.44px;top:703px;width:2px;height:35px;background:#efefef"></div>
<div class="a" style="left:1404.12px;top:703px;width:2px;height:35px;background:#efefef"></div>
<div class="a" style="left:1492.06px;top:703px;width:2px;height:35px;background:#efefef"></div>
<div class="a" style="left:1628.94px;top:703px;width:2px;height:35px;background:#efefef"></div>
<div class="a" style="left:1766.56px;top:703px;width:2px;height:35px;background:#efefef"></div>
<svg style="left:32.56px;top:716.2px" width="5" height="8" viewBox="0 0 5 8"><path d="M0 0 L5 4 L0 8Z" fill="#222"/></svg>
<div class="a" style="left:44.81px;top:710.5px;font-size:13.4px;line-height:20px;transform:scaleY(1.07);color:#5a5a5a">Pre-Tax Deductions</div>
<div class="a" style="left:125.44px;top:710.5px;width:200px;text-align:right;font-size:13.4px;line-height:20px;transform:scaleY(1.07);color:#1e1e1e;font-weight:bold">55</div>
<div class="a" style="left:262.69px;top:710.5px;width:200px;text-align:right;font-size:13.4px;line-height:20px;transform:scaleY(1.07);color:#1e1e1e;font-weight:bold">6,631.76</div>
<div class="a" style="left:400.5px;top:710.5px;width:200px;text-align:right;font-size:13.4px;line-height:20px;transform:scaleY(1.07);color:#1e1e1e;font-weight:bold">0.00</div>
<div class="a" style="left:587.81px;top:710.5px;width:200px;text-align:right;font-size:13.4px;line-height:20px;transform:scaleY(1.07);color:#1e1e1e;font-weight:bold">0.00</div>
<div class="a" style="left:775.88px;top:710.5px;width:200px;text-align:right;font-size:13.4px;line-height:20px;transform:scaleY(1.07);color:#1e1e1e;font-weight:bold">0.00</div>
<div class="a" style="left:850.5px;top:710.5px;width:200px;text-align:right;font-size:13.4px;line-height:20px;transform:scaleY(1.07);color:#1e1e1e;font-weight:bold">0</div>
<div class="a" style="left:987.0px;top:710.5px;width:200px;text-align:right;font-size:13.4px;line-height:20px;transform:scaleY(1.07);color:#1e1e1e;font-weight:bold">0.00</div>
<div class="a" style="left:1062.94px;top:710.5px;width:200px;text-align:right;font-size:13.4px;line-height:20px;transform:scaleY(1.07);color:#1e1e1e;font-weight:bold">55</div>
<div class="a" style="left:1199.62px;top:710.5px;width:200px;text-align:right;font-size:13.4px;line-height:20px;transform:scaleY(1.07);color:#1e1e1e;font-weight:bold">6,631.76</div>
<div class="a" style="left:1711.19px;top:710.5px;width:200px;text-align:right;font-size:13.4px;line-height:20px;transform:scaleY(1.07);color:#1e1e1e;font-weight:bold">6,631.76</div>
<div class="a" style="left:7.56px;top:772px;width:1906.88px;height:2px;background:#efefef"></div>
<div class="a" style="left:254.94px;top:738px;width:2px;height:35px;background:#efefef"></div>
<div class="a" style="left:329.94px;top:738px;width:2px;height:35px;background:#efefef"></div>
<div class="a" style="left:467.19px;top:738px;width:2px;height:35px;background:#efefef"></div>
<div class="a" style="left:605.0px;top:738px;width:2px;height:35px;background:#efefef"></div>
<div class="a" style="left:792.31px;top:738px;width:2px;height:35px;background:#efefef"></div>
<div class="a" style="left:980.38px;top:738px;width:2px;height:35px;background:#efefef"></div>
<div class="a" style="left:1055.0px;top:738px;width:2px;height:35px;background:#efefef"></div>
<div class="a" style="left:1191.5px;top:738px;width:2px;height:35px;background:#efefef"></div>
<div class="a" style="left:1267.44px;top:738px;width:2px;height:35px;background:#efefef"></div>
<div class="a" style="left:1404.12px;top:738px;width:2px;height:35px;background:#efefef"></div>
<div class="a" style="left:1492.06px;top:738px;width:2px;height:35px;background:#efefef"></div>
<div class="a" style="left:1628.94px;top:738px;width:2px;height:35px;background:#efefef"></div>
<div class="a" style="left:1766.56px;top:738px;width:2px;height:35px;background:#efefef"></div>
<svg style="left:32.56px;top:751.2px" width="5" height="8" viewBox="0 0 5 8"><path d="M0 0 L5 4 L0 8Z" fill="#222"/></svg>
<div class="a" style="left:44.81px;top:745.5px;font-size:13.4px;line-height:20px;transform:scaleY(1.07);color:#5a5a5a">Employee Taxes</div>
<div class="a" style="left:125.44px;top:745.5px;width:200px;text-align:right;font-size:13.4px;line-height:20px;transform:scaleY(1.07);color:#1e1e1e;font-weight:bold">74</div>
<div class="a" style="left:262.69px;top:745.5px;width:200px;text-align:right;font-size:13.4px;line-height:20px;transform:scaleY(1.07);color:#1e1e1e;font-weight:bold">5,231.01</div>
<div class="a" style="left:400.5px;top:745.5px;width:200px;text-align:right;font-size:13.4px;line-height:20px;transform:scaleY(1.07);color:#1e1e1e;font-weight:bold">0.00</div>
<div class="a" style="left:850.5px;top:745.5px;width:200px;text-align:right;font-size:13.4px;line-height:20px;transform:scaleY(1.07);color:#1e1e1e;font-weight:bold">0</div>
<div class="a" style="left:987.0px;top:745.5px;width:200px;text-align:right;font-size:13.4px;line-height:20px;transform:scaleY(1.07);color:#1e1e1e;font-weight:bold">0.00</div>
<div class="a" style="left:1062.94px;top:745.5px;width:200px;text-align:right;font-size:13.4px;line-height:20px;transform:scaleY(1.07);color:#1e1e1e;font-weight:bold">74</div>
<div class="a" style="left:1199.62px;top:745.5px;width:200px;text-align:right;font-size:13.4px;line-height:20px;transform:scaleY(1.07);color:#1e1e1e;font-weight:bold">5,231.01</div>
<div class="a" style="left:1711.19px;top:745.5px;width:200px;text-align:right;font-size:13.4px;line-height:20px;transform:scaleY(1.07);color:#1e1e1e;font-weight:bold">5,231.01</div>
<div class="a" style="left:7.56px;top:807px;width:1906.88px;height:2px;background:#efefef"></div>
<div class="a" style="left:254.94px;top:773px;width:2px;height:35px;background:#efefef"></div>
<div class="a" style="left:329.94px;top:773px;width:2px;height:35px;background:#efefef"></div>
<div class="a" style="left:467.19px;top:773px;width:2px;height:35px;background:#efefef"></div>
<div class="a" style="left:605.0px;top:773px;width:2px;height:35px;background:#efefef"></div>
<div class="a" style="left:792.31px;top:773px;width:2px;height:35px;background:#efefef"></div>
<div class="a" style="left:980.38px;top:773px;width:2px;height:35px;background:#efefef"></div>
<div class="a" style="left:1055.0px;top:773px;width:2px;height:35px;background:#efefef"></div>
<div class="a" style="left:1191.5px;top:773px;width:2px;height:35px;background:#efefef"></div>
<div class="a" style="left:1267.44px;top:773px;width:2px;height:35px;background:#efefef"></div>
<div class="a" style="left:1404.12px;top:773px;width:2px;height:35px;background:#efefef"></div>
<div class="a" style="left:1492.06px;top:773px;width:2px;height:35px;background:#efefef"></div>
<div class="a" style="left:1628.94px;top:773px;width:2px;height:35px;background:#efefef"></div>
<div class="a" style="left:1766.56px;top:773px;width:2px;height:35px;background:#efefef"></div>
<svg style="left:32.56px;top:786.2px" width="5" height="8" viewBox="0 0 5 8"><path d="M0 0 L5 4 L0 8Z" fill="#222"/></svg>
<div class="a" style="left:44.81px;top:780.5px;font-size:13.4px;line-height:20px;transform:scaleY(1.07);color:#5a5a5a">Post-Tax Deductions</div>
<div class="a" style="left:125.44px;top:780.5px;width:200px;text-align:right;font-size:13.4px;line-height:20px;transform:scaleY(1.07);color:#1e1e1e;font-weight:bold">74</div>
<div class="a" style="left:262.69px;top:780.5px;width:200px;text-align:right;font-size:13.4px;line-height:20px;transform:scaleY(1.07);color:#1e1e1e;font-weight:bold">3,991.41</div>
<div class="a" style="left:400.5px;top:780.5px;width:200px;text-align:right;font-size:13.4px;line-height:20px;transform:scaleY(1.07);color:#1e1e1e;font-weight:bold">0.00</div>
<div class="a" style="left:587.81px;top:780.5px;width:200px;text-align:right;font-size:13.4px;line-height:20px;transform:scaleY(1.07);color:#1e1e1e;font-weight:bold">0.00</div>
<div class="a" style="left:775.88px;top:780.5px;width:200px;text-align:right;font-size:13.4px;line-height:20px;transform:scaleY(1.07);color:#1e1e1e;font-weight:bold">0.00</div>
<div class="a" style="left:850.5px;top:780.5px;width:200px;text-align:right;font-size:13.4px;line-height:20px;transform:scaleY(1.07);color:#1e1e1e;font-weight:bold">0</div>
<div class="a" style="left:987.0px;top:780.5px;width:200px;text-align:right;font-size:13.4px;line-height:20px;transform:scaleY(1.07);color:#1e1e1e;font-weight:bold">0.00</div>
<div class="a" style="left:1062.94px;top:780.5px;width:200px;text-align:right;font-size:13.4px;line-height:20px;transform:scaleY(1.07);color:#1e1e1e;font-weight:bold">74</div>
<div class="a" style="left:1199.62px;top:780.5px;width:200px;text-align:right;font-size:13.4px;line-height:20px;transform:scaleY(1.07);color:#1e1e1e;font-weight:bold">3,991.41</div>
<div class="a" style="left:1711.19px;top:780.5px;width:200px;text-align:right;font-size:13.4px;line-height:20px;transform:scaleY(1.07);color:#1e1e1e;font-weight:bold">3,991.41</div>
<div class="a" style="left:7.56px;top:842px;width:1906.88px;height:2px;background:#efefef"></div>
<div class="a" style="left:254.94px;top:808px;width:2px;height:35px;background:#efefef"></div>
<div class="a" style="left:329.94px;top:808px;width:2px;height:35px;background:#efefef"></div>
<div class="a" style="left:467.19px;top:808px;width:2px;height:35px;background:#efefef"></div>
<div class="a" style="left:605.0px;top:808px;width:2px;height:35px;background:#efefef"></div>
<div class="a" style="left:792.31px;top:808px;width:2px;height:35px;background:#efefef"></div>
<div class="a" style="left:980.38px;top:808px;width:2px;height:35px;background:#efefef"></div>
<div class="a" style="left:1055.0px;top:808px;width:2px;height:35px;background:#efefef"></div>
<div class="a" style="left:1191.5px;top:808px;width:2px;height:35px;background:#efefef"></div>
<div class="a" style="left:1267.44px;top:808px;width:2px;height:35px;background:#efefef"></div>
<div class="a" style="left:1404.12px;top:808px;width:2px;height:35px;background:#efefef"></div>
<div class="a" style="left:1492.06px;top:808px;width:2px;height:35px;background:#efefef"></div>
<div class="a" style="left:1628.94px;top:808px;width:2px;height:35px;background:#efefef"></div>
<div class="a" style="left:1766.56px;top:808px;width:2px;height:35px;background:#efefef"></div>
<svg style="left:32.56px;top:821.2px" width="5" height="8" viewBox="0 0 5 8"><path d="M0 0 L5 4 L0 8Z" fill="#222"/></svg>
<div class="a" style="left:44.81px;top:815.5px;font-size:13.4px;line-height:20px;transform:scaleY(1.07);color:#5a5a5a">Net Pay</div>
<div class="a" style="left:125.44px;top:815.5px;width:200px;text-align:right;font-size:13.4px;line-height:20px;transform:scaleY(1.07);color:#1e1e1e;font-weight:bold">74</div>
<div class="a" style="left:262.69px;top:815.5px;width:200px;text-align:right;font-size:13.4px;line-height:20px;transform:scaleY(1.07);color:#1e1e1e;font-weight:bold">15,774.63</div>
<div class="a" style="left:400.5px;top:815.5px;width:200px;text-align:right;font-size:13.4px;line-height:20px;transform:scaleY(1.07);color:#1e1e1e;font-weight:bold">0.00</div>
<div class="a" style="left:587.81px;top:815.5px;width:200px;text-align:right;font-size:13.4px;line-height:20px;transform:scaleY(1.07);color:#1e1e1e;font-weight:bold">0.00</div>
<div class="a" style="left:775.88px;top:815.5px;width:200px;text-align:right;font-size:13.4px;line-height:20px;transform:scaleY(1.07);color:#1e1e1e;font-weight:bold">0.00</div>
<div class="a" style="left:850.5px;top:815.5px;width:200px;text-align:right;font-size:13.4px;line-height:20px;transform:scaleY(1.07);color:#1e1e1e;font-weight:bold">0</div>
<div class="a" style="left:987.0px;top:815.5px;width:200px;text-align:right;font-size:13.4px;line-height:20px;transform:scaleY(1.07);color:#1e1e1e;font-weight:bold">0.00</div>
<div class="a" style="left:1062.94px;top:815.5px;width:200px;text-align:right;font-size:13.4px;line-height:20px;transform:scaleY(1.07);color:#1e1e1e;font-weight:bold">74</div>
<div class="a" style="left:1199.62px;top:815.5px;width:200px;text-align:right;font-size:13.4px;line-height:20px;transform:scaleY(1.07);color:#1e1e1e;font-weight:bold">15,774.63</div>
<div class="a" style="left:1711.19px;top:815.5px;width:200px;text-align:right;font-size:13.4px;line-height:20px;transform:scaleY(1.07);color:#1e1e1e;font-weight:bold">15,774.63</div>
<div class="a" style="left:7.56px;top:877px;width:1906.88px;height:2px;background:#efefef"></div>
<div class="a" style="left:254.94px;top:843px;width:2px;height:35px;background:#efefef"></div>
<div class="a" style="left:329.94px;top:843px;width:2px;height:35px;background:#efefef"></div>
<div class="a" style="left:467.19px;top:843px;width:2px;height:35px;background:#efefef"></div>
<div class="a" style="left:605.0px;top:843px;width:2px;height:35px;background:#efefef"></div>
<div class="a" style="left:792.31px;top:843px;width:2px;height:35px;background:#efefef"></div>
<div class="a" style="left:980.38px;top:843px;width:2px;height:35px;background:#efefef"></div>
<div class="a" style="left:1055.0px;top:843px;width:2px;height:35px;background:#efefef"></div>
<div class="a" style="left:1191.5px;top:843px;width:2px;height:35px;background:#efefef"></div>
<div class="a" style="left:1267.44px;top:843px;width:2px;height:35px;background:#efefef"></div>
<div class="a" style="left:1404.12px;top:843px;width:2px;height:35px;background:#efefef"></div>
<div class="a" style="left:1492.06px;top:843px;width:2px;height:35px;background:#efefef"></div>
<div class="a" style="left:1628.94px;top:843px;width:2px;height:35px;background:#efefef"></div>
<div class="a" style="left:1766.56px;top:843px;width:2px;height:35px;background:#efefef"></div>
<svg style="left:32.56px;top:856.2px" width="5" height="8" viewBox="0 0 5 8"><path d="M0 0 L5 4 L0 8Z" fill="#222"/></svg>
<div class="a" style="left:44.81px;top:850.5px;font-size:13.4px;line-height:20px;transform:scaleY(1.07);color:#5a5a5a">Memo Calcs</div>
<div class="a" style="left:125.44px;top:850.5px;width:200px;text-align:right;font-size:13.4px;line-height:20px;transform:scaleY(1.07);color:#1e1e1e;font-weight:bold">55</div>
<div class="a" style="left:262.69px;top:850.5px;width:200px;text-align:right;font-size:13.4px;line-height:20px;transform:scaleY(1.07);color:#1e1e1e;font-weight:bold">6,278.16</div>
<div class="a" style="left:400.5px;top:850.5px;width:200px;text-align:right;font-size:13.4px;line-height:20px;transform:scaleY(1.07);color:#1e1e1e;font-weight:bold">0.00</div>
<div class="a" style="left:587.81px;top:850.5px;width:200px;text-align:right;font-size:13.4px;line-height:20px;transform:scaleY(1.07);color:#1e1e1e;font-weight:bold">0.00</div>
<div class="a" style="left:775.88px;top:850.5px;width:200px;text-align:right;font-size:13.4px;line-height:20px;transform:scaleY(1.07);color:#1e1e1e;font-weight:bold">0.00</div>
<div class="a" style="left:850.5px;top:850.5px;width:200px;text-align:right;font-size:13.4px;line-height:20px;transform:scaleY(1.07);color:#1e1e1e;font-weight:bold">0</div>
<div class="a" style="left:987.0px;top:850.5px;width:200px;text-align:right;font-size:13.4px;line-height:20px;transform:scaleY(1.07);color:#1e1e1e;font-weight:bold">0.00</div>
<div class="a" style="left:1062.94px;top:850.5px;width:200px;text-align:right;font-size:13.4px;line-height:20px;transform:scaleY(1.07);color:#1e1e1e;font-weight:bold">55</div>
<div class="a" style="left:1199.62px;top:850.5px;width:200px;text-align:right;font-size:13.4px;line-height:20px;transform:scaleY(1.07);color:#1e1e1e;font-weight:bold">6,278.16</div>
<div class="a" style="left:1711.19px;top:850.5px;width:200px;text-align:right;font-size:13.4px;line-height:20px;transform:scaleY(1.07);color:#1e1e1e;font-weight:bold">6,278.16</div>
<div class="a" style="left:7.56px;top:912px;width:1906.88px;height:2px;background:#efefef"></div>
<div class="a" style="left:254.94px;top:878px;width:2px;height:35px;background:#efefef"></div>
<div class="a" style="left:329.94px;top:878px;width:2px;height:35px;background:#efefef"></div>
<div class="a" style="left:467.19px;top:878px;width:2px;height:35px;background:#efefef"></div>
<div class="a" style="left:605.0px;top:878px;width:2px;height:35px;background:#efefef"></div>
<div class="a" style="left:792.31px;top:878px;width:2px;height:35px;background:#efefef"></div>
<div class="a" style="left:980.38px;top:878px;width:2px;height:35px;background:#efefef"></div>
<div class="a" style="left:1055.0px;top:878px;width:2px;height:35px;background:#efefef"></div>
<div class="a" style="left:1191.5px;top:878px;width:2px;height:35px;background:#efefef"></div>
<div class="a" style="left:1267.44px;top:878px;width:2px;height:35px;background:#efefef"></div>
<div class="a" style="left:1404.12px;top:878px;width:2px;height:35px;background:#efefef"></div>
<div class="a" style="left:1492.06px;top:878px;width:2px;height:35px;background:#efefef"></div>
<div class="a" style="left:1628.94px;top:878px;width:2px;height:35px;background:#efefef"></div>
<div class="a" style="left:1766.56px;top:878px;width:2px;height:35px;background:#efefef"></div>
<svg style="left:32.56px;top:891.2px" width="5" height="8" viewBox="0 0 5 8"><path d="M0 0 L5 4 L0 8Z" fill="#222"/></svg>
<div class="a" style="left:44.81px;top:885.5px;font-size:13.4px;line-height:20px;transform:scaleY(1.07);color:#5a5a5a">Employer Taxes</div>
<div class="a" style="left:125.44px;top:885.5px;width:200px;text-align:right;font-size:13.4px;line-height:20px;transform:scaleY(1.07);color:#1e1e1e;font-weight:bold">74</div>
<div class="a" style="left:262.69px;top:885.5px;width:200px;text-align:right;font-size:13.4px;line-height:20px;transform:scaleY(1.07);color:#1e1e1e;font-weight:bold">3,484.19</div>
<div class="a" style="left:400.5px;top:885.5px;width:200px;text-align:right;font-size:13.4px;line-height:20px;transform:scaleY(1.07);color:#1e1e1e;font-weight:bold">0.00</div>
<div class="a" style="left:850.5px;top:885.5px;width:200px;text-align:right;font-size:13.4px;line-height:20px;transform:scaleY(1.07);color:#1e1e1e;font-weight:bold">0</div>
<div class="a" style="left:987.0px;top:885.5px;width:200px;text-align:right;font-size:13.4px;line-height:20px;transform:scaleY(1.07);color:#1e1e1e;font-weight:bold">0.00</div>
<div class="a" style="left:1062.94px;top:885.5px;width:200px;text-align:right;font-size:13.4px;line-height:20px;transform:scaleY(1.07);color:#1e1e1e;font-weight:bold">74</div>
<div class="a" style="left:1199.62px;top:885.5px;width:200px;text-align:right;font-size:13.4px;line-height:20px;transform:scaleY(1.07);color:#1e1e1e;font-weight:bold">3,484.19</div>
<div class="a" style="left:1711.19px;top:885.5px;width:200px;text-align:right;font-size:13.4px;line-height:20px;transform:scaleY(1.07);color:#1e1e1e;font-weight:bold">3,484.19</div>
<div class="a" style="left:7.56px;top:947px;width:1906.88px;height:2px;background:#efefef"></div>
<div class="a" style="left:254.94px;top:913px;width:2px;height:35px;background:#efefef"></div>
<div class="a" style="left:329.94px;top:913px;width:2px;height:35px;background:#efefef"></div>
<div class="a" style="left:467.19px;top:913px;width:2px;height:35px;background:#efefef"></div>
<div class="a" style="left:605.0px;top:913px;width:2px;height:35px;background:#efefef"></div>
<div class="a" style="left:792.31px;top:913px;width:2px;height:35px;background:#efefef"></div>
<div class="a" style="left:980.38px;top:913px;width:2px;height:35px;background:#efefef"></div>
<div class="a" style="left:1055.0px;top:913px;width:2px;height:35px;background:#efefef"></div>
<div class="a" style="left:1191.5px;top:913px;width:2px;height:35px;background:#efefef"></div>
<div class="a" style="left:1267.44px;top:913px;width:2px;height:35px;background:#efefef"></div>
<div class="a" style="left:1404.12px;top:913px;width:2px;height:35px;background:#efefef"></div>
<div class="a" style="left:1492.06px;top:913px;width:2px;height:35px;background:#efefef"></div>
<div class="a" style="left:1628.94px;top:913px;width:2px;height:35px;background:#efefef"></div>
<div class="a" style="left:1766.56px;top:913px;width:2px;height:35px;background:#efefef"></div>
<svg style="left:21.130000000000003px;top:926.2px" width="5" height="8" viewBox="0 0 5 8"><path d="M0 0 L5 4 L0 8Z" fill="#222"/></svg>
<div class="a" style="left:33.38px;top:920.5px;font-size:13.4px;line-height:20px;transform:scaleY(1.07);color:#5a5a5a">Community Center Co. USA</div>
<div class="a" style="left:7.56px;top:982px;width:1906.88px;height:2px;background:#efefef"></div>
<div class="a" style="left:254.94px;top:948px;width:2px;height:35px;background:#efefef"></div>
<div class="a" style="left:329.94px;top:948px;width:2px;height:35px;background:#efefef"></div>
<div class="a" style="left:467.19px;top:948px;width:2px;height:35px;background:#efefef"></div>
<div class="a" style="left:605.0px;top:948px;width:2px;height:35px;background:#efefef"></div>
<div class="a" style="left:792.31px;top:948px;width:2px;height:35px;background:#efefef"></div>
<div class="a" style="left:980.38px;top:948px;width:2px;height:35px;background:#efefef"></div>
<div class="a" style="left:1055.0px;top:948px;width:2px;height:35px;background:#efefef"></div>
<div class="a" style="left:1191.5px;top:948px;width:2px;height:35px;background:#efefef"></div>
<div class="a" style="left:1267.44px;top:948px;width:2px;height:35px;background:#efefef"></div>
<div class="a" style="left:1404.12px;top:948px;width:2px;height:35px;background:#efefef"></div>
<div class="a" style="left:1492.06px;top:948px;width:2px;height:35px;background:#efefef"></div>
<div class="a" style="left:1628.94px;top:948px;width:2px;height:35px;background:#efefef"></div>
<div class="a" style="left:1766.56px;top:948px;width:2px;height:35px;background:#efefef"></div>
<svg style="left:21.130000000000003px;top:961.2px" width="5" height="8" viewBox="0 0 5 8"><path d="M0 0 L5 4 L0 8Z" fill="#222"/></svg>
<div class="a" style="left:33.38px;top:955.5px;font-size:13.4px;line-height:20px;transform:scaleY(1.07);color:#5a5a5a">Contractor Co. USA</div>
<div class="a" style="left:7.56px;top:1017px;width:1906.88px;height:2px;background:#efefef"></div>
<div class="a" style="left:254.94px;top:983px;width:2px;height:35px;background:#efefef"></div>
<div class="a" style="left:329.94px;top:983px;width:2px;height:35px;background:#efefef"></div>
<div class="a" style="left:467.19px;top:983px;width:2px;height:35px;background:#efefef"></div>
<div class="a" style="left:605.0px;top:983px;width:2px;height:35px;background:#efefef"></div>
<div class="a" style="left:792.31px;top:983px;width:2px;height:35px;background:#efefef"></div>
<div class="a" style="left:980.38px;top:983px;width:2px;height:35px;background:#efefef"></div>
<div class="a" style="left:1055.0px;top:983px;width:2px;height:35px;background:#efefef"></div>
<div class="a" style="left:1191.5px;top:983px;width:2px;height:35px;background:#efefef"></div>
<div class="a" style="left:1267.44px;top:983px;width:2px;height:35px;background:#efefef"></div>
<div class="a" style="left:1404.12px;top:983px;width:2px;height:35px;background:#efefef"></div>
<div class="a" style="left:1492.06px;top:983px;width:2px;height:35px;background:#efefef"></div>
<div class="a" style="left:1628.94px;top:983px;width:2px;height:35px;background:#efefef"></div>
<div class="a" style="left:1766.56px;top:983px;width:2px;height:35px;background:#efefef"></div>
<svg style="left:21.130000000000003px;top:996.2px" width="5" height="8" viewBox="0 0 5 8"><path d="M0 0 L5 4 L0 8Z" fill="#222"/></svg>
<div class="a" style="left:33.38px;top:990.5px;font-size:13.4px;line-height:20px;transform:scaleY(1.07);color:#5a5a5a">Financial Co. USA</div>
<div class="a" style="left:7.56px;top:1052px;width:1906.88px;height:2px;background:#efefef"></div>
<div class="a" style="left:254.94px;top:1018px;width:2px;height:35px;background:#efefef"></div>
<div class="a" style="left:329.94px;top:1018px;width:2px;height:35px;background:#efefef"></div>
<div class="a" style="left:467.19px;top:1018px;width:2px;height:35px;background:#efefef"></div>
<div class="a" style="left:605.0px;top:1018px;width:2px;height:35px;background:#efefef"></div>
<div class="a" style="left:792.31px;top:1018px;width:2px;height:35px;background:#efefef"></div>
<div class="a" style="left:980.38px;top:1018px;width:2px;height:35px;background:#efefef"></div>
<div class="a" style="left:1055.0px;top:1018px;width:2px;height:35px;background:#efefef"></div>
<div class="a" style="left:1191.5px;top:1018px;width:2px;height:35px;background:#efefef"></div>
<div class="a" style="left:1267.44px;top:1018px;width:2px;height:35px;background:#efefef"></div>
<div class="a" style="left:1404.12px;top:1018px;width:2px;height:35px;background:#efefef"></div>
<div class="a" style="left:1492.06px;top:1018px;width:2px;height:35px;background:#efefef"></div>
<div class="a" style="left:1628.94px;top:1018px;width:2px;height:35px;background:#efefef"></div>
<div class="a" style="left:1766.56px;top:1018px;width:2px;height:35px;background:#efefef"></div>
<svg style="left:21.130000000000003px;top:1031.2px" width="5" height="8" viewBox="0 0 5 8"><path d="M0 0 L5 4 L0 8Z" fill="#222"/></svg>
<div class="a" style="left:33.38px;top:1025.5px;font-size:13.4px;line-height:20px;transform:scaleY(1.07);color:#5a5a5a">Grocery Co. USA</div></div></div>
<div class="a" style="left:1892.25px;top:424.5px;width:25.309999999999945px;height:628.69px;background:#f0f0f0"></div>
<div class="a" style="left:1893.75px;top:445.5px;width:18.0px;height:480.75px;background:#c2c2c2"></div>
<svg style="left:1899.0px;top:432.19px" width="8.25" height="4.88" viewBox="0 0 10 6"><path d="M0 6 L10 6 L5 0Z" fill="#505050"/></svg>
<svg style="left:1899.0px;top:1039.69px" width="8.25" height="4.88" viewBox="0 0 10 6"><path d="M0 0 L10 0 L5 6Z" fill="#505050"/></svg>
<div class="a" style="left:7.56px;top:1053.19px;width:1884.69px;height:22.5px;background:#f0f0f0"></div>
<div class="a" style="left:27.19px;top:1054.69px;width:1540.31px;height:18.929999999999836px;background:#c2c2c2"></div>
<svg style="left:15.56px;top:1060.31px" width="4.5" height="8.25" viewBox="0 0 6 10"><path d="M6 0 L6 10 L0 5Z" fill="#9a9a9a"/></svg>
<svg style="left:1879.12px;top:1060.31px" width="4.5" height="8.25" viewBox="0 0 6 10"><path d="M0 0 L0 10 L6 5Z" fill="#505050"/></svg>
<div class="a" style="left:1892.25px;top:1053.19px;width:25.309999999999945px;height:22.5px;background:#e2e2e2"></div>
<div class="a" style="left:0px;top:0px;width:2.34px;height:1080px;background:#333"></div>
<div class="a" style="left:2.34px;top:49.5px;width:1.69px;height:1030.5px;background:#d4d4d4"></div>
<div class="a" style="left:1917.66px;top:0px;width:2.339999999999918px;height:1080px;background:#3a3a3a"></div>
<div class="a" style="left:0px;top:1075.69px;width:1920px;height:4.309999999999945px;background:#3a3a3a"></div>
</div></body></html>
